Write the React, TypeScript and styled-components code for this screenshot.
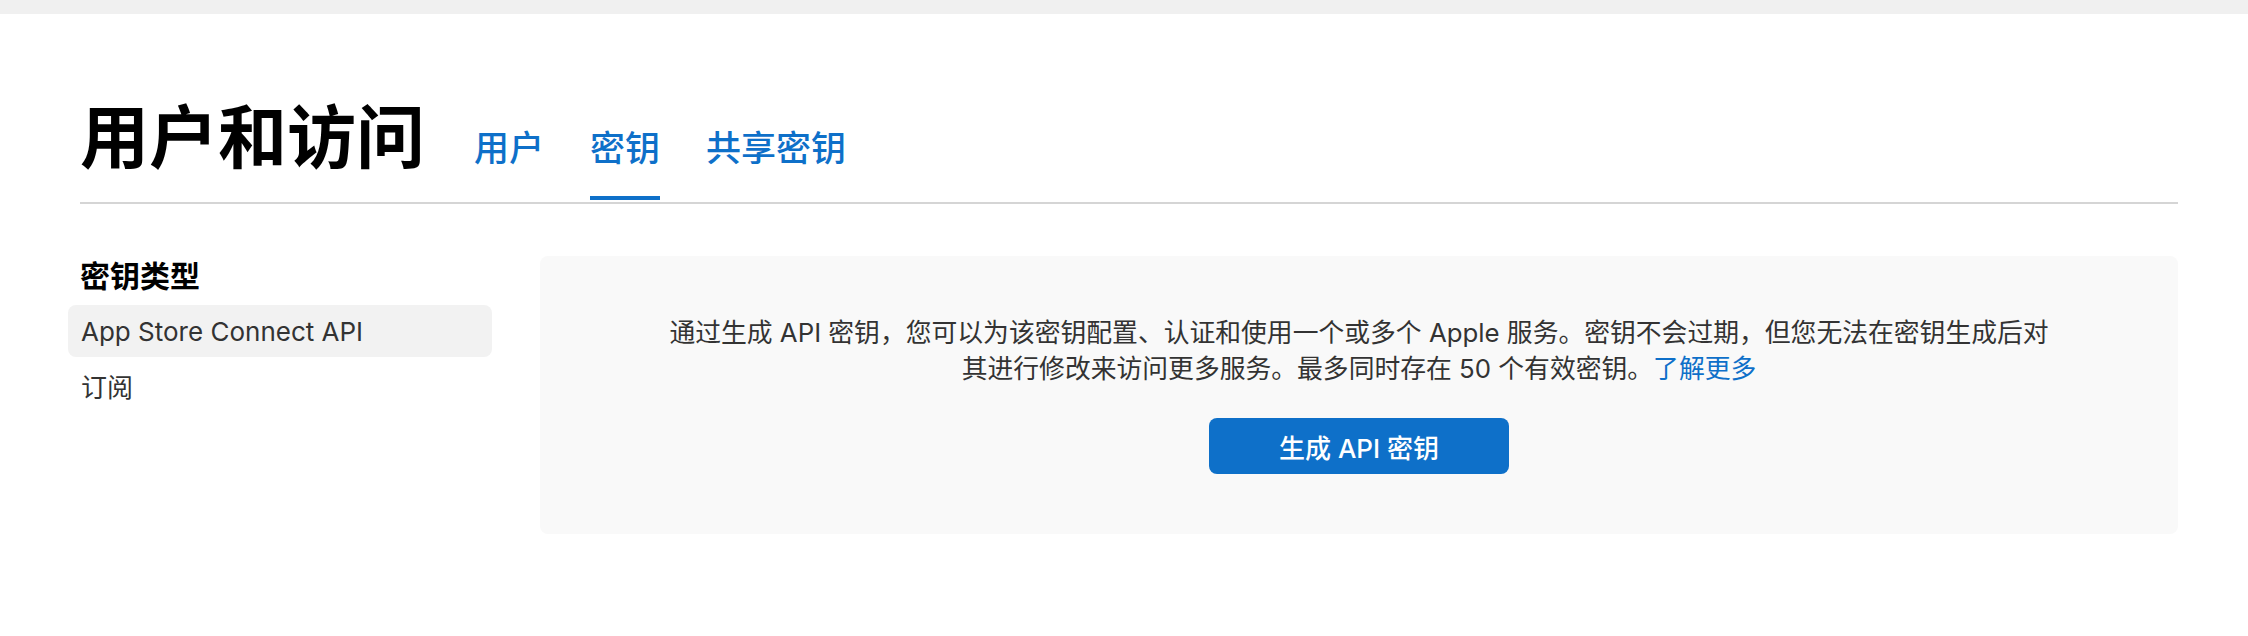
import React from "react";
import styled, { createGlobalStyle } from "styled-components";

const GlobalStyle = createGlobalStyle`
  html, body {
    margin: 0;
    padding: 0;
    background: #ffffff;
  }
  body {
    font-family: Inter, "Noto Sans CJK SC", "Noto Sans", sans-serif;
    -webkit-font-smoothing: antialiased;
  }
  * { box-sizing: border-box; }
`;

const TopBar = styled.div`
  height: 14px;
  background: #f0f0f0;
`;

const Page = styled.main`
  padding: 0 70px 0 80px;
`;

const Header = styled.header`
  display: flex;
  align-items: flex-end;
  height: 190px;
  border-bottom: 2px solid #d5d5d5;
`;

const Title = styled.h1`
  margin: 0 49px 34px 0;
  font-family: "Noto Sans CJK SC", sans-serif;
  font-size: 69px;
  line-height: 69px;
  font-weight: 700;
  color: #000000;
`;

const Tabs = styled.nav`
  display: flex;
  gap: 46px;
`;

const Tab = styled.a<{ $active?: boolean }>`
  display: block;
  font-family: "Noto Sans CJK SC", sans-serif;
  font-size: 35px;
  line-height: 35px;
  font-weight: 500;
  color: #0e70c9;
  text-decoration: none;
  padding-bottom: 33px;
  margin-bottom: 2px;
  border-bottom: 4px solid ${(p) => (p.$active ? "#0e70c9" : "transparent")};
  cursor: pointer;
`;

const Content = styled.section`
  display: flex;
  align-items: flex-start;
  gap: 48px;
  margin: 52px 0 0 -12px;
`;

const Sidebar = styled.aside`
  width: 424px;
  flex: none;
  display: flex;
  flex-direction: column;
  gap: 2px;
`;

const SidebarHeading = styled.h2`
  margin: 0 0 11px;
  padding-left: 12px;
  font-family: "Noto Sans CJK SC", sans-serif;
  font-size: 30px;
  line-height: 36px;
  font-weight: 700;
  color: #000000;
`;

const NavItem = styled.a<{ $active?: boolean }>`
  display: flex;
  align-items: center;
  height: 52px;
  padding: 0 13px;
  border-radius: 8px;
  background: ${(p) => (p.$active ? "#f2f2f2" : "transparent")};
  font-family: Inter, "Noto Sans CJK SC", sans-serif;
  font-size: 26px;
  color: #333333;
  text-decoration: none;
  cursor: pointer;
`;

const Panel = styled.div`
  flex: 1;
  min-width: 0;
  background: #f9f9f9;
  border-radius: 8px;
  padding: 59px 40px 60px;
  display: flex;
  flex-direction: column;
  align-items: center;
`;

const Description = styled.p`
  margin: 0;
  font-family: Inter, "Noto Sans CJK SC", sans-serif;
  font-size: 25.8px;
  line-height: 36px;
  color: #333333;
  text-align: center;
  white-space: nowrap;
`;

const Link = styled.a`
  color: #0e70c9;
  text-decoration: none;
  cursor: pointer;
`;

const PrimaryButton = styled.button`
  margin-top: 31px;
  width: 300px;
  height: 56px;
  border: none;
  border-radius: 8px;
  background: #0e70c9;
  color: #ffffff;
  font-family: Inter, "Noto Sans CJK SC", sans-serif;
  font-size: 26px;
  font-weight: 500;
  cursor: pointer;
`;

export default function App() {
  return (
    <>
      <GlobalStyle />
      <TopBar />
      <Page>
        <Header>
          <Title>用户和访问</Title>
          <Tabs>
            <Tab>用户</Tab>
            <Tab $active>密钥</Tab>
            <Tab>共享密钥</Tab>
          </Tabs>
        </Header>
        <Content>
          <Sidebar>
            <SidebarHeading>密钥类型</SidebarHeading>
            <NavItem $active>App Store Connect API</NavItem>
            <NavItem>订阅</NavItem>
          </Sidebar>
          <Panel>
            <Description>
              通过生成 API 密钥，您可以为该密钥配置、认证和使用一个或多个 Apple 服务。密钥不会过期，但您无法在密钥生成后对
              <br />
              其进行修改来访问更多服务。最多同时存在 50 个有效密钥。<Link>了解更多</Link>
            </Description>
            <PrimaryButton>生成 API 密钥</PrimaryButton>
          </Panel>
        </Content>
      </Page>
    </>
  );
}
